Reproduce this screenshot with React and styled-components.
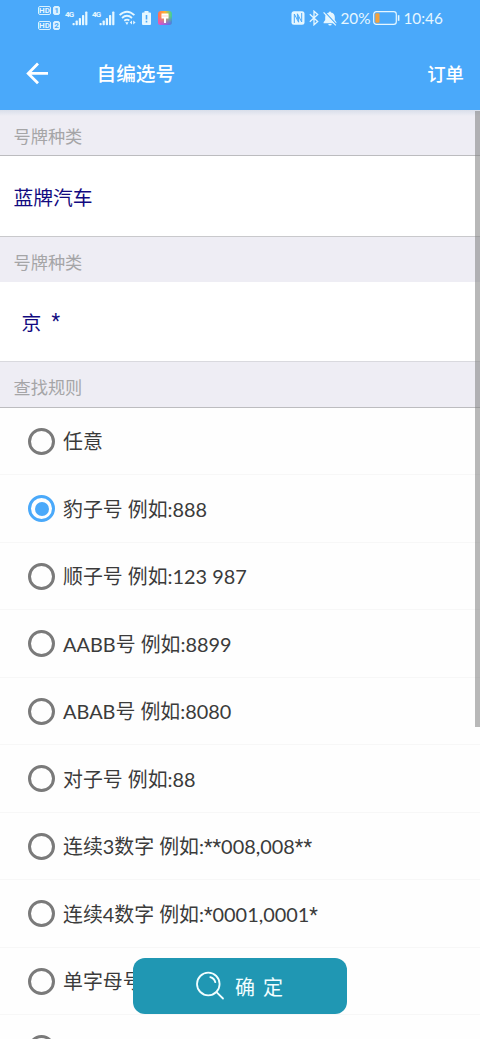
import { Fragment, useState } from 'react'
import styled, { createGlobalStyle } from 'styled-components'

const GlobalStyle = createGlobalStyle`
  * {
    box-sizing: border-box;
  }

  body {
    margin: 0;
    background: #fefefe;
    font-family: Lato, 'Noto Sans CJK SC', sans-serif;
  }
`

const Screen = styled.div`
  position: relative;
  width: 480px;
  height: 1039px;
  overflow: hidden;
  display: flex;
  flex-direction: column;
`

const TopArea = styled.header`
  flex: none;
  height: 110px;
  background: #4aa9fa;
  color: #fff;
`

const StatusBar = styled.div`
  display: flex;
  align-items: center;
  justify-content: space-between;
  height: 36px;
  padding: 0 38px;
  color: #e6f7ff;
`

const StatusGroup = styled.div`
  display: flex;
  align-items: center;
  gap: ${({ $gap }) => $gap || 0}px;
  margin-left: ${({ $offset }) => $offset || 0}px;

  svg {
    display: block;
    flex: none;
  }
`

const HdStack = styled.div`
  display: flex;
  flex-direction: column;
  gap: 6px;
  margin-right: 5px;
`

const HdRow = styled.div`
  display: flex;
  gap: 2px;
`

const HdBadge = styled.span`
  display: flex;
  align-items: center;
  justify-content: center;
  width: ${({ $width }) => $width}px;
  height: 9px;
  border: 1px solid #d9f1ff;
  border-radius: 2px;
  font: bold 8px/7px Roboto, sans-serif;
  background: ${({ $filled }) => ($filled ? '#d9f1ff' : 'transparent')};
  color: ${({ $filled }) => ($filled ? '#4aa9fa' : '#e6f7ff')};
`

const Network = styled.div`
  display: flex;
  align-items: flex-start;
  width: 22px;
  margin-right: 5px;
  font: bold 8px/8px Roboto, sans-serif;
  letter-spacing: -0.9px;

  svg {
    margin-left: -1px;
  }
`

const StatusText = styled.span`
  font-size: 15.3px;
  line-height: 20px;
  white-space: nowrap;
  width: ${({ $width }) => $width}px;
`

const NavBar = styled.nav`
  display: flex;
  align-items: center;
  height: 74px;
  padding: 0 16px 0 26px;
`

const BackButton = styled.button`
  display: flex;
  width: 24px;
  padding: 0;
  border: 0;
  background: none;
  color: #fff;
`

const Title = styled.h1`
  flex: 1;
  margin: 2px 0 0 46.5px;
  font-size: 19.7px;
  line-height: 28px;
  font-weight: 500;
`

const OrderLink = styled.span`
  margin-top: 2px;
  font-size: 18.4px;
  line-height: 28px;
  font-weight: 500;
`

const Content = styled.main`
  flex: none;
`

const SectionLabel = styled.div`
  display: flex;
  align-items: center;
  height: ${({ $height }) => $height}px;
  padding: ${({ $top }) => $top}px 13.5px 0;
  background: ${({ $shadow }) =>
    $shadow ? 'linear-gradient(#d9deea, #eeedf4 6px)' : '#eeedf4'};
  border-top: ${({ $topLine }) => ($topLine ? `1px solid ${$topLine}` : '0')};
  border-bottom: ${({ $bottomLine }) => ($bottomLine ? `1px solid ${$bottomLine}` : '0')};
  color: #a5a5a7;
  font-size: 17.2px;
  line-height: 24px;
`

const ValueField = styled.div`
  display: flex;
  align-items: center;
  height: ${({ $height }) => $height}px;
  padding: ${({ $top }) => $top}px 0 0 ${({ $indent }) => $indent}px;
  background: #fff;
  color: #120a80;
  font-size: 19.8px;
  line-height: 28px;
  white-space: pre;
`

const RuleRow = styled.label`
  display: flex;
  align-items: center;
  height: 67.5px;
  padding: 1px 0 0 28px;
  border-bottom: 1px solid #f7f7f7;
  color: #3b3b3b;
`

const Radio = styled.span`
  display: flex;
  align-items: center;
  justify-content: center;
  width: 27px;
  height: 27px;
  border: 3px solid ${({ $checked }) => ($checked ? '#4aa9fa' : '#7a7a7a')};
  border-radius: 50%;

  &::after {
    content: '';
    width: 14px;
    height: 14px;
    border-radius: 50%;
    background: ${({ $checked }) => ($checked ? '#4aa9fa' : 'transparent')};
  }
`

const RuleText = styled.span`
  margin: 0 0 0 8px;
  font-size: 19.9px;
  line-height: 28px;
  white-space: nowrap;
`

const Star = styled.span`
  font-family: Roboto, sans-serif;
  line-height: 1;
`

const HiddenInput = styled.input`
  display: none;
`

const ScrollThumb = styled.div`
  position: absolute;
  top: 111px;
  right: 0;
  width: 5.5px;
  height: 616px;
  background: rgba(125, 125, 125, 0.55);
`

const ConfirmButton = styled.button`
  position: absolute;
  left: 133px;
  bottom: 25px;
  display: flex;
  align-items: center;
  width: 214px;
  height: 56px;
  padding: 0 0 0 61.5px;
  border: 0;
  border-radius: 12px;
  background: #2097b3;
  color: #f2feff;
  font-family: inherit;
  font-size: 20px;
  line-height: 28px;

  span {
    margin: 2px 0 0 10.5px;
    word-spacing: 3px;
    white-space: nowrap;
  }
`

const rules = [
  '任意',
  '豹子号 例如:888',
  '顺子号 例如:123 987',
  'AABB号 例如:8899',
  'ABAB号 例如:8080',
  '对子号 例如:88',
  '连续3数字 例如:**008,008**',
  '连续4数字 例如:*0001,0001*',
  '单字母号',
  '',
]

// Lato's asterisk is too small next to the digits
const withStars = (text) =>
  text.split(/(\*+)/).map((part, i) =>
    part.startsWith('*') ? <Star key={i}>{part}</Star> : <Fragment key={i}>{part}</Fragment>
  )

const SignalIcon = () => (
  <svg width="17" height="15" viewBox="0 0 17 15" fill="currentColor">
    <rect x="0.5" y="12" width="2.2" height="2.3" rx=".7" />
    <rect x="3.6" y="9.5" width="2.2" height="4.8" rx=".7" />
    <rect x="6.8" y="7" width="2.2" height="7.3" rx=".7" />
    <rect x="10" y="4" width="2.2" height="10.3" rx=".7" />
    <rect x="13.2" y="0.5" width="2.2" height="13.8" rx=".7" />
  </svg>
)

const WifiIcon = () => (
  <svg width="18" height="16" viewBox="0 0 18 16" fill="none" stroke="currentColor" strokeWidth="1.8">
    <path d="M.6 5.2Q8 -1.8 15.400 5.200" />
    <path d="M3 8Q8 3.6 13 8" />
    <path d="M5.3 10.8Q8 8.6 10.3 10.5" />
    <path d="M6.2 12.2h3.3L8 15z" fill="currentColor" stroke="none" />
    <path d="M13 10.6 10.8 12.5 13 14.4zM14.2 10.6 16.6 12.5 14.2 14.4z" fill="currentColor" stroke="none" />
  </svg>
)

const BatteryAlertIcon = () => (
  <svg width="9" height="14" viewBox="0 0 9 14">
    <path d="M2.5 0h4v1.5H8a1 1 0 0 1 1 1V13a1 1 0 0 1-1 1H1a1 1 0 0 1-1-1V2.5a1 1 0 0 1 1-1h1.5z" fill="currentColor" />
    <path d="M4.5 4v4.5M4.5 9.8v1.7" stroke="#4aa9fa" strokeWidth="1.6" />
  </svg>
)

const ThemeIcon = () => (
  <svg width="14" height="14" viewBox="0 0 14 14">
    <defs>
      <linearGradient id="themeBase" x1="0" y1="0" x2="1" y2="0">
        <stop offset="0" stopColor="#ff6b5a" />
        <stop offset=".5" stopColor="#ffb52e" />
        <stop offset="1" stopColor="#35d0a0" />
      </linearGradient>
      <linearGradient id="themeLow" x1="0" y1="0" x2="1" y2="0">
        <stop offset="0" stopColor="#e74bd8" />
        <stop offset="1" stopColor="#4a6bf5" />
      </linearGradient>
      <linearGradient id="themeFade" x1="0" y1="0" x2="0" y2="1">
        <stop offset=".35" stopColor="#000" />
        <stop offset="1" stopColor="#fff" />
      </linearGradient>
      <mask id="themeMask">
        <rect width="14" height="14" fill="url(#themeFade)" />
      </mask>
    </defs>
    <rect width="14" height="14" rx="3" fill="url(#themeBase)" />
    <rect width="14" height="14" rx="3" fill="url(#themeLow)" mask="url(#themeMask)" />
    <path d="M3.5 2.5h7v5H8V12H6V7.5H3.5z" fill="#fff" />
    <path d="M3.5 5h7" stroke="#ffc9b0" strokeWidth=".7" />
  </svg>
)

const NfcIcon = () => (
  <svg width="14" height="14" viewBox="0 0 14 14">
    <rect x=".5" y=".3" width="13" height="13.4" rx="2.5" fill="currentColor" />
    <path d="M3.3 12V3L7.6 11.2V5.5M10.700 2V11L6.400 2.800V8.500" fill="none" stroke="#4aa9fa" strokeWidth="1" />
  </svg>
)

const BluetoothIcon = () => (
  <svg width="10" height="16" viewBox="0 0 10 16" fill="none" stroke="currentColor" strokeWidth="1.3">
    <path d="M.8 4.3 8.7 11.4 5 14.8V1.2L8.7 4.6.8 11.7" />
  </svg>
)

const MutedIcon = () => (
  <svg width="14" height="15" viewBox="0 0 14 15">
    <path d="M7 .5a1 1 0 0 1 1 1C10.4 2 11.8 3.8 11.8 6v3l1.6 2.2v1H.6v-1l1.6-2.2V6C2.2 3.8 3.6 2 6 1.5a1 1 0 0 1 1-1zM5.3 12.9h3.4a1.7 1.7 0 0 1-3.4 0z" fill="currentColor" />
    <path d="M1.8 1 13.6 13.6" stroke="#4aa9fa" strokeWidth="1.2" />
    <path d="M.6 1.4 12.8 14.4" stroke="currentColor" strokeWidth="1.3" />
  </svg>
)

const BatteryIcon = () => (
  <svg width="27" height="14" viewBox="0 0 27 14">
    <rect x=".7" y=".7" width="22.6" height="12.6" rx="2.6" fill="none" stroke="currentColor" strokeWidth="1.2" />
    <rect x="2.3" y="2.3" width="4.2" height="9.4" rx="1" fill="#f3a13c" />
    <path d="M25.6 4.2v5.6" stroke="currentColor" strokeWidth="1.6" />
  </svg>
)

const BackIcon = () => (
  <svg width="24" height="24" viewBox="0 0 24 24" fill="none" stroke="currentColor" strokeWidth="2.8">
    <path d="M22 12.4H2.5M12 2.6 2.2 12.4 12 22.2" />
  </svg>
)

const SearchIcon = () => (
  <svg width="30" height="30" viewBox="0 0 30 30" fill="none" stroke="currentColor" strokeWidth="1.8" strokeLinecap="round">
    <circle cx="13.3" cy="13" r="11.3" />
    <path d="M21.5 21.2 28 27.5M15.3 6.1Q19.4 7.3 20.3 11.2" />
  </svg>
)

const App = () => {
  const [selected, setSelected] = useState(1)

  return (
    <Screen>
      <GlobalStyle />
      <TopArea>
        <StatusBar>
          <StatusGroup>
            <HdStack>
              {['1', '2'].map((sim) => (
                <HdRow key={sim}>
                  <HdBadge $width={13}>HD</HdBadge>
                  <HdBadge $width={7} $filled>{sim}</HdBadge>
                </HdRow>
              ))}
            </HdStack>
            <Network>4G<SignalIcon /></Network>
            <Network>4G<SignalIcon /></Network>
            <WifiIcon />
            <StatusGroup $offset={4.5} $gap={7}>
              <BatteryAlertIcon />
              <ThemeIcon />
            </StatusGroup>
          </StatusGroup>
          <StatusGroup $gap={4}>
            <NfcIcon />
            <BluetoothIcon />
            <MutedIcon />
            <StatusText $width={28}>20%</StatusText>
            <BatteryIcon />
            <StatusText $width={38.5}>10:46</StatusText>
          </StatusGroup>
        </StatusBar>
        <NavBar>
          <BackButton aria-label="返回">
            <BackIcon />
          </BackButton>
          <Title>自编选号</Title>
          <OrderLink>订单</OrderLink>
        </NavBar>
      </TopArea>

      <Content>
        <SectionLabel $height={46} $top={9} $shadow $bottomLine="#bcbcbf">号牌种类</SectionLabel>
        <ValueField $height={80} $top={1} $indent={13.5}>蓝牌汽车</ValueField>
        <SectionLabel $height={46} $top={7} $topLine="#c9c9cc">号牌种类</SectionLabel>
        <ValueField $height={79} $top={0} $indent={21.5}>京  <Star>*</Star></ValueField>
        <SectionLabel $height={46.5} $top={8} $topLine="#d9d9de" $bottomLine="#bcbcbf">查找规则</SectionLabel>
        {rules.map((rule, index) => (
          <RuleRow key={index}>
            <HiddenInput
              type="radio"
              name="rule"
              checked={selected === index}
              onChange={() => setSelected(index)}
            />
            <Radio $checked={selected === index} />
            <RuleText>{withStars(rule)}</RuleText>
          </RuleRow>
        ))}
      </Content>

      <ScrollThumb />
      <ConfirmButton>
        <SearchIcon />
        <span>确 定</span>
      </ConfirmButton>
    </Screen>
  )
}

export default App
